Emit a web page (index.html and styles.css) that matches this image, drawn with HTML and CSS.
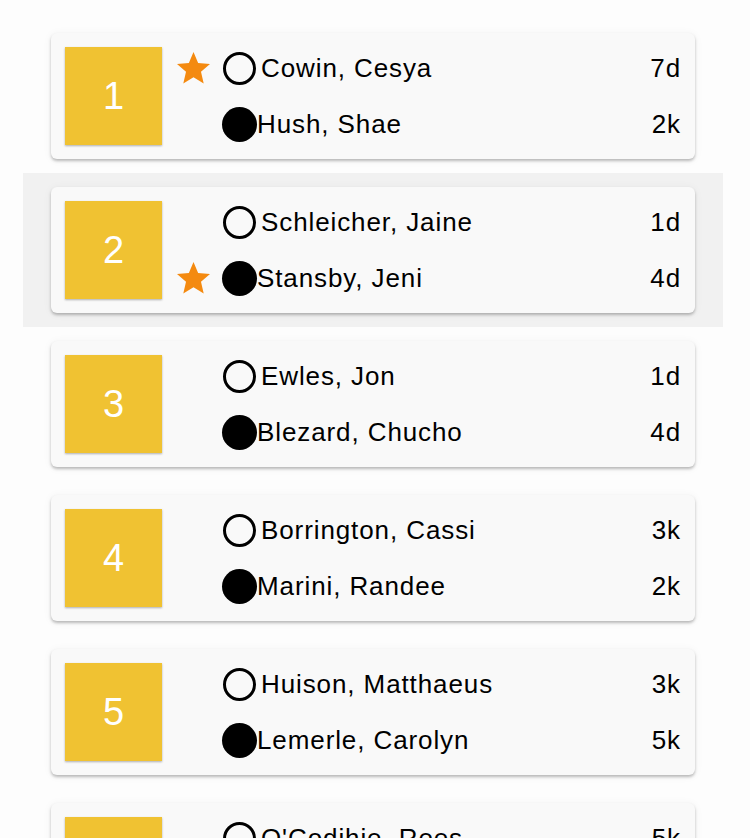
FILE: index.html
```html
<!DOCTYPE html>
<html lang="en">
<head>
<meta charset="utf-8">
<title>Pairings</title>
<link rel="stylesheet" href="styles.css">
</head>
<body>
<div class="list">
  <div class="item">
    <div class="card">
      <div class="seed">1</div>
      <div class="players">
        <div class="player">
          <span class="mark"><svg class="star" viewBox="2 2 20 19.3"><path d="M12 17.27L18.18 21l-1.64-7.03L22 9.24l-7.19-.61L12 2 9.19 8.63 2 9.24l5.46 4.73L5.82 21z"/></svg></span>
          <span class="stone white"></span><span class="name">Cowin, Cesya</span><span class="rank">7d</span>
        </div>
        <div class="player">
          <span class="mark"></span>
          <span class="stone black"></span><span class="name">Hush, Shae</span><span class="rank">2k</span>
        </div>
      </div>
    </div>
  </div>
  <div class="item selected">
    <div class="card">
      <div class="seed">2</div>
      <div class="players">
        <div class="player">
          <span class="mark"></span>
          <span class="stone white"></span><span class="name">Schleicher, Jaine</span><span class="rank">1d</span>
        </div>
        <div class="player">
          <span class="mark"><svg class="star" viewBox="2 2 20 19.3"><path d="M12 17.27L18.18 21l-1.64-7.03L22 9.24l-7.19-.61L12 2 9.19 8.63 2 9.24l5.46 4.73L5.82 21z"/></svg></span>
          <span class="stone black"></span><span class="name">Stansby, Jeni</span><span class="rank">4d</span>
        </div>
      </div>
    </div>
  </div>
  <div class="item">
    <div class="card">
      <div class="seed">3</div>
      <div class="players">
        <div class="player">
          <span class="mark"></span>
          <span class="stone white"></span><span class="name">Ewles, Jon</span><span class="rank">1d</span>
        </div>
        <div class="player">
          <span class="mark"></span>
          <span class="stone black"></span><span class="name">Blezard, Chucho</span><span class="rank">4d</span>
        </div>
      </div>
    </div>
  </div>
  <div class="item">
    <div class="card">
      <div class="seed">4</div>
      <div class="players">
        <div class="player">
          <span class="mark"></span>
          <span class="stone white"></span><span class="name">Borrington, Cassi</span><span class="rank">3k</span>
        </div>
        <div class="player">
          <span class="mark"></span>
          <span class="stone black"></span><span class="name">Marini, Randee</span><span class="rank">2k</span>
        </div>
      </div>
    </div>
  </div>
  <div class="item">
    <div class="card">
      <div class="seed">5</div>
      <div class="players">
        <div class="player">
          <span class="mark"></span>
          <span class="stone white"></span><span class="name">Huison, Matthaeus</span><span class="rank">3k</span>
        </div>
        <div class="player">
          <span class="mark"></span>
          <span class="stone black"></span><span class="name">Lemerle, Carolyn</span><span class="rank">5k</span>
        </div>
      </div>
    </div>
  </div>
  <div class="item">
    <div class="card">
      <div class="seed">6</div>
      <div class="players">
        <div class="player">
          <span class="mark"></span>
          <span class="stone white"></span><span class="name">O'Codihie, Rees</span><span class="rank">5k</span>
        </div>
        <div class="player">
          <span class="mark"></span>
          <span class="stone black"></span><span class="name">Tolland, Marga</span><span class="rank">1k</span>
        </div>
      </div>
    </div>
  </div>
</div>
</body>
</html>
```

FILE: styles.css
```css
html {
  overflow: hidden;
  background: #fdfdfd;
}

body {
  margin: 0;
  font-family: "Liberation Sans", Arial, Helvetica, sans-serif;
  color: #000;
}

.list {
  width: 700px;
  padding: 19px 0 0 23px;
}

.item {
  padding: 14px 28px;
}

.item.selected {
  background: #f1f1f1;
}

.card {
  display: flex;
  box-sizing: border-box;
  height: 126px;
  padding: 7px 14px 7px 14px;
  background: #f9f9f9;
  border-radius: 6px;
  box-shadow: 0 2px 3px rgba(0, 0, 0, 0.25), 0 1px 10px rgba(0, 0, 0, 0.05);
}

.seed {
  flex: none;
  width: 97px;
  height: 98px;
  margin: 7px 0;
  background: #f0c232;
  color: #fff;
  font-size: 38px;
  display: flex;
  align-items: center;
  justify-content: center;
  box-shadow: 0 1px 2px rgba(0, 0, 0, 0.3);
}

.players {
  flex: 1;
  display: flex;
  flex-direction: column;
  margin-left: 15px;
}

.player {
  height: 56px;
  display: flex;
  align-items: center;
  font-size: 26px;
  letter-spacing: 0.9px;
}

.mark {
  flex: none;
  width: 33px;
  height: 32px;
  margin-right: 13px;
  display: flex;
  align-items: center;
}

.star {
  width: 33px;
  height: 32px;
  fill: #f48a10;
}

.stone {
  flex: none;
  box-sizing: border-box;
  border-radius: 50%;
}

.stone.white {
  width: 33px;
  height: 33px;
  border: 3px solid #000;
  margin-right: 5px;
}

.stone.black {
  width: 35px;
  height: 35px;
  background: #000;
  margin-left: -1px;
  margin-right: 0;
}

.name {
  flex: 1;
  white-space: nowrap;
}

.rank {
  flex: none;
  text-align: right;
}
```
